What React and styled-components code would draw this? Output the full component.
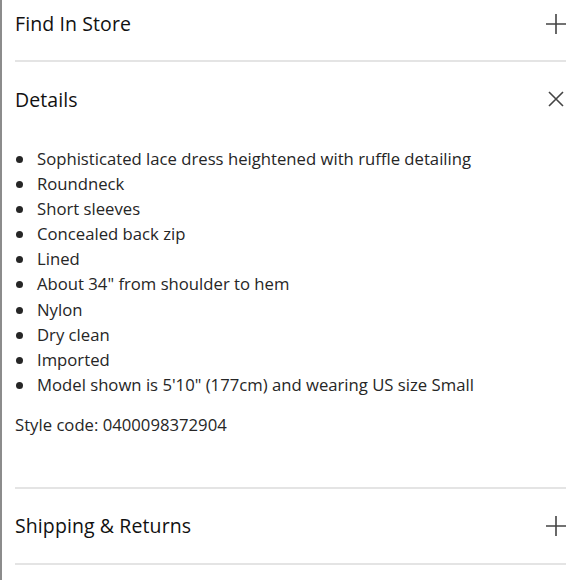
import React from 'react'
import styled, { createGlobalStyle } from 'styled-components'

const GlobalStyle = createGlobalStyle`
  html, body {
    margin: 0;
    padding: 0;
    background: #fff;
  }
  body {
    font-family: "Open Sans", "Liberation Sans", sans-serif;
    color: #1a1a1a;
    overflow: hidden;
  }
`

const Page = styled.div`
  height: 580px;
  border-left: 2px solid #8c8c8c;
  box-sizing: border-box;
  overflow: hidden;
`

const Panel = styled.div`
  margin-top: -13px;
  padding: 0 14px 0 13px;
`

const Section = styled.section`
  border-bottom: 2px solid #e4e4e4;
`

const Header = styled.div`
  display: flex;
  align-items: center;
  justify-content: space-between;
  height: ${(p) => (p.$first ? '73px' : '74px')};
`

const Title = styled.h3`
  margin: 0;
  font-size: 19.5px;
  font-weight: 500;
  letter-spacing: 0.1px;
  color: #111;
`

const IconWrap = styled.span`
  display: flex;
  width: 22px;
  height: 22px;
  align-items: center;
  justify-content: center;
  margin-right: -1px;
`

const Body = styled.div`
  padding: 10px 0 50px;
`

const List = styled.ul`
  list-style: none;
  margin: 0;
  padding: 0;
`

const Item = styled.li`
  position: relative;
  padding-left: 22px;
  font-size: 16.7px;
  line-height: 25.1px;
  color: #262626;

  &::before {
    content: '';
    position: absolute;
    left: 1px;
    top: 10px;
    width: 7px;
    height: 7px;
    border-radius: 50%;
    background: #262626;
  }
`

const StyleCode = styled.p`
  margin: 15px 0 0;
  font-size: 16.7px;
  line-height: 25px;
  color: #262626;
`

const Plus = () => (
  <svg width="22" height="22" viewBox="0 0 22 22">
    <path d="M11 1v20M1 11h20" stroke="#444" strokeWidth="1.6" fill="none" />
  </svg>
)

const Close = () => (
  <svg width="22" height="22" viewBox="0 0 22 22">
    <path d="M4 4l14 14M18 4L4 18" stroke="#444" strokeWidth="1.6" fill="none" />
  </svg>
)

const details = [
  'Sophisticated lace dress heightened with ruffle detailing',
  'Roundneck',
  'Short sleeves',
  'Concealed back zip',
  'Lined',
  'About 34" from shoulder to hem',
  'Nylon',
  'Dry clean',
  'Imported',
  'Model shown is 5\'10" (177cm) and wearing US size Small',
]

const AccordionRow = ({ title, open, first, children }) => (
  <Section>
    <Header $first={first}>
      <Title>{title}</Title>
      <IconWrap>{open ? <Close /> : <Plus />}</IconWrap>
    </Header>
    {open && children}
  </Section>
)

const App = () => {
  return (
    <Page>
      <GlobalStyle />
      <Panel>
        <AccordionRow title="Find In Store" first />
        <AccordionRow title="Details" open>
          <Body>
            <List>
              {details.map((d) => (
                <Item key={d}>{d}</Item>
              ))}
            </List>
            <StyleCode>Style code: 0400098372904</StyleCode>
          </Body>
        </AccordionRow>
        <AccordionRow title="Shipping & Returns" />
      </Panel>
    </Page>
  )
}

export default App
